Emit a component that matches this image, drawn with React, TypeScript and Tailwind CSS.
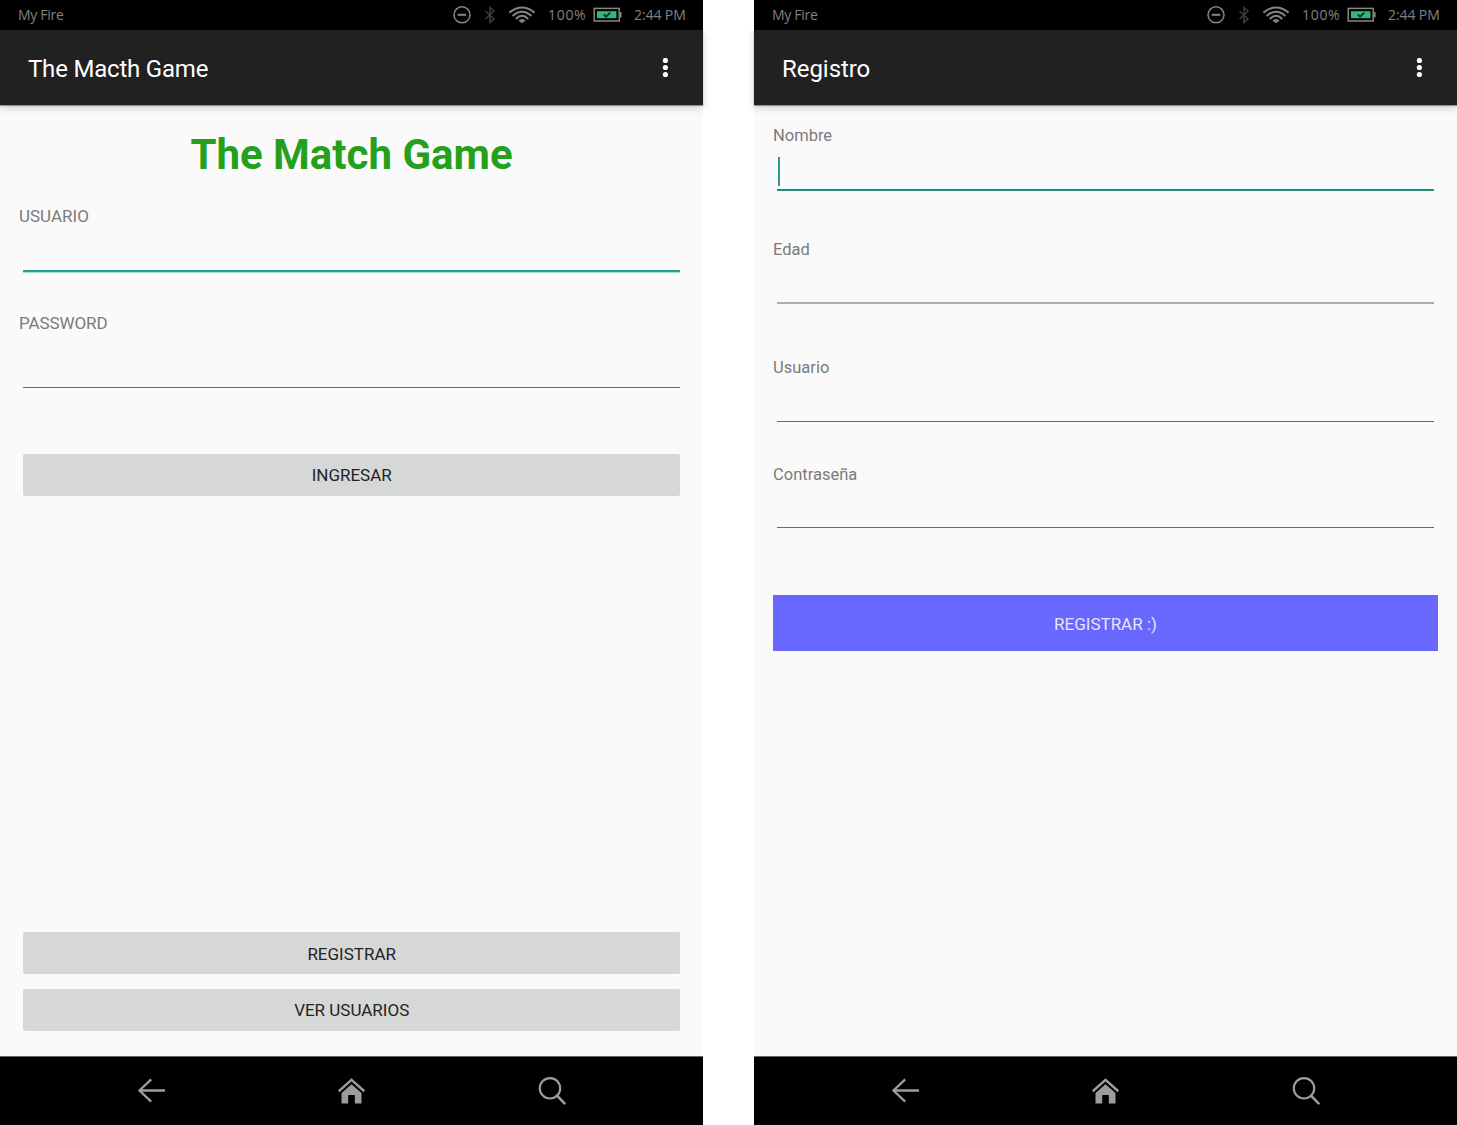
import type { ReactNode } from "react";

function StatusBar() {
  return (
    <div className="z-20 flex h-[30px] shrink-0 items-center bg-black pr-[17px] pl-[18px] font-['Open_Sans',sans-serif] text-[14px] leading-[30px] whitespace-nowrap text-[#808080]">
      <span className="tracking-[-0.3px]">My Fire</span>
      <svg className="ml-auto h-[18px] w-[18px]" viewBox="0 0 18 18" fill="none" stroke="#858585" strokeWidth="1.5">
        <circle cx="9" cy="8.8" r="8" />
        <path d="M4.7 8.8h8.6" strokeWidth="2" />
      </svg>
      <svg className="ml-[13px] h-[18px] w-[12px]" viewBox="0 0 12 18" fill="none" stroke="#3c3c3c" strokeWidth="1.5">
        <path d="M1.5 5 10 13 6 16.5V1.5L10 5 1.5 13" />
      </svg>
      <svg className="ml-[12px] h-[18px] w-[28px]" viewBox="0 0 28 18" fill="none" stroke="#858585" strokeWidth="2">
        <path d="M1.4 6.6Q14-3.6 26.6 6.6M4.6 9.9Q14 1.5 23.4 9.9M7.8 13Q14 6.7 20.2 13" />
        <path d="M10.3 14.4Q14 11.4 17.7 14.4L14 17.3Z" fill="#858585" stroke="none" />
      </svg>
      <span className="ml-[12px] w-[39px] tracking-[0.7px]">100%</span>
      <svg className="ml-[6px] h-[16px] w-[29px]" viewBox="0 0 29 16" fill="none">
        <rect x="1.2" y="1.4" width="25" height="12.6" stroke="#858585" strokeWidth="1.5" />
        <path d="M27 4.9h1.6v5.6H27z" fill="#858585" />
        <rect x="4" y="4.2" width="19.4" height="7" fill="#2fb878" />
        <path d="m10.8 7.4 2.2 2.3 4.3-4" stroke="#08331f" strokeWidth="1.8" />
      </svg>
      <span className="ml-[12px] w-[52px] tracking-[-0.1px]">2:44 PM</span>
    </div>
  );
}

function AppBar({ title, className }: { title: string; className: string }) {
  return (
    <header className="z-10 flex h-[75px] shrink-0 items-center justify-between bg-[#212121] pr-[34px] pl-[28px] text-white shadow-[0_1px_1px_rgba(0,0,0,0.35),0_3px_8px_rgba(0,0,0,0.16)]">
      <h1 className={`pt-[3px] text-[24px] leading-[30px] whitespace-nowrap ${className}`}>{title}</h1>
      <svg className="h-[20px] w-[7px]" viewBox="0 0 7 20" fill="white">
        <circle cx="3.4" cy="2.5" r="2.6" />
        <circle cx="3.4" cy="9.5" r="2.6" />
        <circle cx="3.4" cy="16.5" r="2.6" />
      </svg>
    </header>
  );
}

function NavBar() {
  return (
    <nav className="flex h-[69px] shrink-0 items-center justify-between border-t border-[#666] bg-black px-[137px]">
      <svg className="h-[28px] w-[28px]" viewBox="0 0 28 28" fill="none" stroke="#9c9c9c" strokeWidth="2.3">
        <path d="M28 13.5H2.5M14.2 2.3 2.5 13.5l11.7 11.2" />
      </svg>
      <svg className="h-[28px] w-[28px]" viewBox="0 0 28 28">
        <path d="m.7 14.2 12.8-11.4 12.8 11.4" fill="none" stroke="#9c9c9c" strokeWidth="2.5" />
        <path d="M13.5 7.2 23.5 16V26.6H16.8v-8.5h-6.6v8.5H3.5V16Z" fill="#9c9c9c" />
      </svg>
      <svg className="h-[28px] w-[28px]" viewBox="0 0 28 28" fill="none" stroke="#9c9c9c" strokeWidth="2.2">
        <circle cx="12" cy="11.3" r="10.2" />
        <path d="m19.2 18.8 7.3 7.5" strokeWidth="2.6" strokeLinecap="round" />
      </svg>
    </nav>
  );
}

function Phone({ title, titleClass, children }: { title: string; titleClass: string; children: ReactNode }) {
  return (
    <section className="flex h-[1125px] w-[703px] flex-col bg-[#fafafa]">
      <StatusBar />
      <AppBar title={title} className={titleClass} />
      <main className="flex min-h-0 flex-1 flex-col px-[19px]">{children}</main>
      <NavBar />
    </section>
  );
}

function Field({ label, className, line }: { label: string; className: string; line: string }) {
  return (
    <label className={`flex flex-col leading-5 text-[#7b7b7b] ${className}`}>
      {label}
      <input
        className={`mr-[4px] ml-[4.4px] min-h-0 flex-1 bg-transparent caret-transparent outline-none ${line}`}
      />
    </label>
  );
}

function GrayButton({ children, className }: { children: string; className: string }) {
  return (
    <button
      className={`mr-[4px] ml-[4.4px] h-[42px] shrink-0 rounded-[2px] bg-[#d6d7d7] text-[17px] leading-5 text-[#232323] ${className}`}
    >
      {children}
    </button>
  );
}

export default function App() {
  return (
    <div className="flex h-[1125px] w-[1457px] justify-between overflow-hidden bg-white font-[Roboto,sans-serif]">
      <Phone title="The Macth Game" titleClass="tracking-[-0.2px]">
        <h2 className="mt-[25px] text-center text-[42px] leading-[50px] font-bold text-[#24a01c]">The Match Game</h2>
        <Field
          label="USUARIO"
          className="mt-[26px] h-[66px] text-[17px]"
          line="border-b-2 border-[#27a08f] shadow-[0_1px_0_#a5dcd3]"
        />
        <Field label="PASSWORD" className="mt-[41px] h-[75px] text-[17px] tracking-[-0.1px]" line="border-b border-[#6b6b6b]" />
        <GrayButton className="mt-[66px]">INGRESAR</GrayButton>
        <GrayButton className="mt-auto pt-[2px]">REGISTRAR</GrayButton>
        <GrayButton className="mt-[15px] mb-[25px]">VER USUARIOS</GrayButton>
      </Phone>
      <Phone title="Registro" titleClass="tracking-[-0.05px]">
        <div className="relative mt-[21px]">
          <Field label="Nombre" className="h-[65px] text-[16.5px]" line="border-b-2 border-[#208f80]" />
          <span className="absolute top-[31px] left-[5px] h-[29px] w-[2px] bg-[#2a9d8d]" />
        </div>
        <Field label="Edad" className="mt-[49px] h-[64px] text-[16.5px]" line="border-b-2 border-[#adadad]" />
        <Field label="Usuario" className="mt-[54px] h-[64px] text-[16.5px]" line="border-b border-[#6b6b6b]" />
        <Field label="Contraseña" className="mt-[43px] h-[63px] text-[16.5px]" line="border-b border-[#6b6b6b]" />
        <button className="mt-[67px] h-[56px] bg-[#6868ff] pt-[2px] text-[17px] leading-5 text-[#e5e5fb]">REGISTRAR :)</button>
      </Phone>
    </div>
  );
}
